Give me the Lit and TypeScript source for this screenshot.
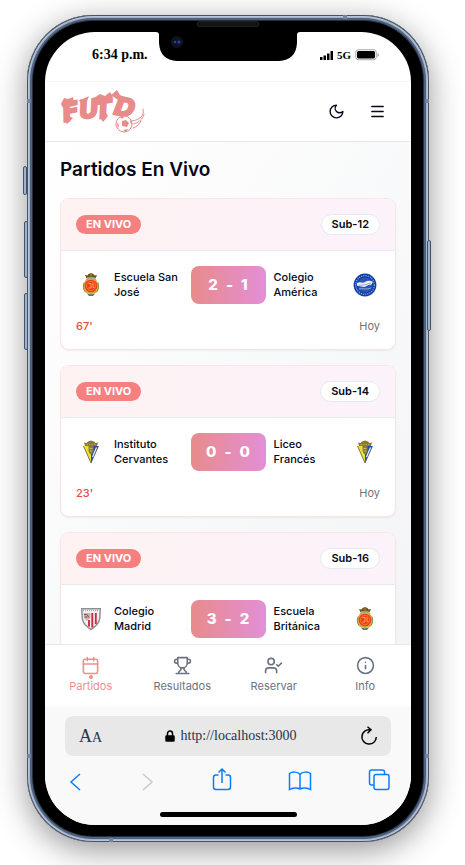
import { LitElement, html, css, svg, nothing } from "lit";
import { customElement, property } from "lit/decorators.js";
import { classMap } from "lit/directives/class-map.js";

type Crest = "crown" | "round" | "triangle" | "stripes";

interface Match {
  home: string;
  homeCrest: Crest;
  away: string;
  awayCrest: Crest;
  homeGoals: number;
  awayGoals: number;
  minute?: number;
  category: string;
}

const MATCHES: Match[] = [
  { home: "Escuela San José", homeCrest: "crown", away: "Colegio América", awayCrest: "round", homeGoals: 2, awayGoals: 1, minute: 67, category: "Sub-12" },
  { home: "Instituto Cervantes", homeCrest: "triangle", away: "Liceo Francés", awayCrest: "triangle", homeGoals: 0, awayGoals: 0, minute: 23, category: "Sub-14" },
  { home: "Colegio Madrid", homeCrest: "stripes", away: "Escuela Británica", awayCrest: "crown", homeGoals: 3, awayGoals: 2, category: "Sub-16" },
];

const crests = {
  crown: svg`
    <path d="M10.500 8.500 9 5l2.500.5 1-1.500L15 3l2.500 1 1 1.500L21 5l-1.500 3.500z" fill="#6b5420"/>
    <path d="M11 7.500h8M15 3.500v3.500" stroke="#b8932f" stroke-width="1"/>
    <path d="M10 9h10l1 2.500c2.500 2.500 2.500 8 0 10.500-1.500 2.500-10.500 2.500-12 0-2.500-2.500-2.500-8 0-10.500z" fill="#d8a93a"/>
    <path d="M8 12.500c-1 3-1 6.500 1 9M22 12.500c1 3 1 6.500-1 9" stroke="#7d9a4e" stroke-width="1" fill="none"/>
    <circle cx="15" cy="16" r="6.300" fill="#ee3f22"/>
    <circle cx="15" cy="16" r="4.600" fill="none" stroke="#f77e35" stroke-width=".8"/>
    <path d="M12.500 13.500H15V18M17 13v4.500h1.500M12.500 18H15" stroke="#ffb340" stroke-width=".9" fill="none"/>
    <path d="M11 23.500q4 1.500 8 0l-2 2.500h-4z" fill="#4c8060"/>`,
  round: svg`
    <circle cx="15" cy="15" r="11.400" fill="#0d3da6"/>
    <circle cx="15" cy="15" r="9.300" fill="none" stroke="#8ea7df" stroke-width="1.300" stroke-dasharray="1.200 1"/>
    <circle cx="15" cy="15" r="7.400" fill="#2d55b4"/>
    <path d="M7 13c4-2 5 1 8-1s6-1 8 0l-2 3c-3-1-4 2-7 2s-5-2-7-1z" fill="#e8eefb"/>
    <path d="M9 15c4 1 7-1 12-2M9 19c3-1 8 1 12-1" stroke="#8fa9dd" stroke-width="1" fill="none"/>`,
  triangle: svg`
    <path d="M9 9 8 5.500l2.500.5L12 4.500 15 3.500l3 1L19.500 6l2.500-.5L21 9z" fill="#8a7a30"/>
    <path d="M10.500 7.500h9" stroke="#b7a550" stroke-width="1" stroke-dasharray="1.500 1"/>
    <path d="M7.500 9H15v17z" fill="#f3e02a"/>
    <path d="M15 9h7.500L15 26z" fill="#1450aa"/>
    <path d="M7.500 9 15 26l7.500-17" fill="none" stroke="#4f5a58" stroke-width=".8"/>
    <path d="M20.500 10.500 16.500 20" stroke="#eef2fa" stroke-width="1.200"/>
    <path d="M12.500 9h5v4c0 2-1 3.500-2.500 4.500-1.500-1-2.500-2.500-2.500-4.500z" fill="#8b7a42"/>
    <path d="M13.500 11.500h3M14 14h2" stroke="#c9bb7a" stroke-width=".9"/>`,
  stripes: svg`
    <path d="M5 4h20l-.5 10c-.5 6-5 9-9.500 12.500C10.500 23 6 20 5.500 14z" fill="#8f8f95"/>
    <path d="M6.500 5.500h17l-.5 8.500c-.5 5-4 7.500-8 10.500-4-3-7.500-5.500-8-10.500z" fill="#f4f1f1"/>
    <path d="M7 6.500h16" stroke="#a9a9b0" stroke-width="1.500" stroke-dasharray="1 1"/>
    <path d="M13 16v6.500M16.300 9v14.500M19.800 9v11" stroke="#cf2740" stroke-width="1.900"/>
    <path d="M7.500 9h7v5l-4 3-2.500-3z" fill="#c9b4ae"/>
    <path d="M8 10.500h3l2 3M8.500 13h3" stroke="#8a4a48" stroke-width="1" fill="none"/>`,
};

const icons = {
  moon: svg`<path d="M12 3a6 6 0 0 0 9 9 9 9 0 1 1-9-9Z"/>`,
  menu: svg`<path d="M4 5h16M4 12h16M4 19h16"/>`,
  calendar: svg`<rect x="3" y="4" width="18" height="18" rx="2"/><path d="M8 2v4M16 2v4M3 10h18"/>`,
  trophy: svg`<path d="M6 9H4.500a2.500 2.500 0 0 1 0-5H6M18 9h1.500a2.500 2.500 0 0 0 0-5H18M4 22h16M10 14.660V17c0 .55-.47.98-.97 1.210C7.850 18.750 7 20.240 7 22M14 14.660V17c0 .55.47.98.97 1.210C16.150 18.750 17 20.240 17 22M18 2H6v7a6 6 0 0 0 12 0V2Z"/>`,
  userCheck: svg`<path d="M16 21v-2a4 4 0 0 0-4-4H6a4 4 0 0 0-4 4v2"/><circle cx="9" cy="7" r="4"/><path d="m16 11 2 2 4-4"/>`,
  info: svg`<circle cx="12" cy="12" r="10"/><path d="M12 16v-4M12 8h.01"/>`,
};

const lineIcon = (name: keyof typeof icons) => html`
  <svg class="line-icon" viewBox="0 0 24 24" aria-hidden="true">${icons[name]}</svg>`;

const iconStyles = css`
  .line-icon {
    display: block;
    fill: none;
    stroke: currentColor;
    stroke-width: 2;
    stroke-linecap: round;
    stroke-linejoin: round;
  }
`;

@customElement("match-card")
class MatchCard extends LitElement {
  @property({ attribute: false }) match!: Match;

  static styles = css`
    :host {
      display: block;
      border: 1px solid #fbe4e6;
      border-radius: 9px;
      background: #fff;
      box-shadow: 0 1px 2px rgba(0, 0, 0, 0.06);
      overflow: hidden;
    }
    .head {
      display: flex;
      justify-content: space-between;
      align-items: center;
      padding: 15px;
      border-bottom: 1px solid #e6eaf3;
      background: linear-gradient(to right, #fef2f2, #fcf2fa);
    }
    .live,
    .category {
      border-radius: 11px;
      font-size: 11px;
    }
    .live {
      padding: 0 10px;
      line-height: 19px;
      font-weight: 700;
      color: #fff;
      background: #f67f7f;
    }
    .category {
      padding: 0 10px;
      border: 1px solid #e4e9f2;
      line-height: 19px;
      font-weight: 600;
      background: #fff;
    }
    .body {
      display: grid;
      gap: 15px;
      padding: 15px;
    }
    .teams {
      display: grid;
      grid-template-columns: 1fr 75px 1fr;
      align-items: center;
    }
    .team {
      display: flex;
      align-items: center;
      gap: 8px;
    }
    .away {
      justify-content: space-between;
      padding-left: 8px;
    }
    .name {
      flex: 1;
      font-size: 11px;
      line-height: 15px;
      font-weight: 500;
    }
    .crest {
      flex: none;
      width: 30px;
      height: 30px;
    }
    .score {
      display: flex;
      justify-content: center;
      gap: 8px;
      border-radius: 8px;
      font-size: 15px;
      line-height: 38px;
      font-weight: 800;
      color: #fff;
      background: linear-gradient(to right, #e88b8b, #e38fd6);
    }
    .foot {
      display: flex;
      justify-content: space-between;
      font-size: 11px;
      line-height: 15px;
      font-weight: 500;
    }
    .minute {
      color: #ef4444;
    }
    .day {
      font-weight: 400;
      color: #71717a;
    }
  `;

  private crest(name: Crest) {
    return html`<svg class="crest" viewBox="0 0 30 30" aria-hidden="true">${crests[name]}</svg>`;
  }

  render() {
    const m = this.match;
    return html`
      <div class="head">
        <span class="live">EN VIVO</span>
        <span class="category">${m.category}</span>
      </div>
      <div class="body">
        <div class="teams">
          <div class="team">${this.crest(m.homeCrest)}<span class="name">${m.home}</span></div>
          <div class="score"><span>${m.homeGoals}</span><span>-</span><span>${m.awayGoals}</span></div>
          <div class="team away"><span class="name">${m.away}</span>${this.crest(m.awayCrest)}</div>
        </div>
        ${m.minute === undefined
          ? nothing
          : html`<div class="foot">
              <span class="minute">${m.minute}'</span>
              <span class="day">Hoy</span>
            </div>`}
      </div>
    `;
  }
}

@customElement("live-app")
class LiveApp extends LitElement {
  static styles = [
    iconStyles,
    css`
      :host {
        display: flex;
        flex-direction: column;
        flex: 1;
        min-height: 0;
        font-family: Inter, "Liberation Sans", sans-serif;
        color: #020817;
        background: #fff;
      }
      .header {
        display: flex;
        align-items: center;
        justify-content: space-between;
        height: 59px;
        padding: 0 15px;
        border-top: 1px solid #f6f6f6;
        border-bottom: 1px solid #e5e7eb;
      }
      .logo {
        width: 86px;
        height: 44px;
        overflow: visible;
      }
      .word {
        font: italic 700 25px "DejaVu Sans", sans-serif;
        fill: #e88b8b;
        stroke: #e88b8b;
        stroke-width: 2;
      }
      .actions {
        display: flex;
        gap: 3px;
      }
      .action {
        display: grid;
        place-items: center;
        width: 38px;
        height: 38px;
        padding: 0;
        border: 0;
        color: inherit;
        background: none;
      }
      .action .line-icon {
        width: 17px;
        height: 17px;
      }
      .content {
        flex: 1;
        min-height: 0;
        overflow: hidden auto;
        scrollbar-width: none;
        padding: 15px;
        background: linear-gradient(to bottom right, #fff, #f3f4f6);
      }
      .title {
        margin: 0 0 15px;
        font-size: 19px;
        line-height: 26px;
        font-weight: 600;
      }
      .cards {
        display: grid;
        gap: 15px;
      }
      .nav {
        display: grid;
        grid-template-columns: repeat(4, 1fr);
        border-top: 1px solid #e5e7eb;
        background: #fff;
      }
      .tab {
        position: relative;
        display: flex;
        flex-direction: column;
        align-items: center;
        gap: 4px;
        padding: 11px 0 12px;
        font-size: 11px;
        line-height: 15px;
        color: #6b7280;
        text-decoration: none;
      }
      .tab .line-icon {
        width: 19px;
        height: 19px;
      }
      .tab.active {
        color: #ee8e8e;
      }
      .tab.active::after {
        content: "";
        position: absolute;
        top: 30px;
        width: 4px;
        height: 4px;
        border-radius: 50%;
        background: currentColor;
      }
    `,
  ];

  render() {
    const tabs = [
      { label: "Partidos", icon: "calendar" as const, active: true },
      { label: "Resultados", icon: "trophy" as const, active: false },
      { label: "Reservar", icon: "userCheck" as const, active: false },
      { label: "Info", icon: "info" as const, active: false },
    ];
    return html`
      <header class="header">
        <svg class="logo" viewBox="0 0 86 44" role="img" aria-label="FUTD">
          <text class="word" x="4 20 36 53" y="32 29 29 24" rotate="-12 -8 -8 10">FUTD</text>
          <g fill="#e88b8b">
            <path d="M1 14 4 8l4 1 5-2 1 5-7 2-4 4z"/>
            <path d="m5 27 4-1 4 2-6 6-2-3zM19 10l6-2 4-2-2 5-6 3zM34 8l6-4 5 2 5-4 3 5-7 4-9 1z"/>
            <path d="m41 24 5-1 2 3-5 6-2-3zM51 5l6-5 3 5 8 4-2 4-8-3z"/>
          </g>
          <g fill="none" stroke="#e88b8b" stroke-linecap="round">
            <path d="M83 19c2 7-4 11-11 12M84 24c-1 6-6 9-11 10M81 31c-2 4-5 6-8 7"/>
          </g>
          <circle cx="64" cy="34" r="8" fill="#fff" stroke="#e88b8b"/>
          <path d="m62 31 4-1 3 3-2 4-5-1zM60 27l5-1-3 3zM71 29l1 6-2-3zM57 32l2 3-1 4zM63 40l5-1-2 3z" fill="#e88b8b"/>
        </svg>
        <div class="actions">
          <button class="action" aria-label="Modo oscuro">${lineIcon("moon")}</button>
          <button class="action" aria-label="Menú">${lineIcon("menu")}</button>
        </div>
      </header>
      <main class="content">
        <h1 class="title">Partidos En Vivo</h1>
        <div class="cards">${MATCHES.map((m) => html`<match-card .match=${m}></match-card>`)}</div>
      </main>
      <nav class="nav">
        ${tabs.map(
          (t) => html`<a class=${classMap({ tab: true, active: t.active })} href="#">
            ${lineIcon(t.icon)}<span>${t.label}</span>
          </a>`
        )}
      </nav>
    `;
  }
}

@customElement("browser-bar")
class BrowserBar extends LitElement {
  static styles = css`
    :host {
      display: block;
      padding: 10px 20px 8px;
      background: #f9f9f9;
      font-family: "Liberation Serif", serif;
      color: #26324b;
    }
    .address {
      display: flex;
      align-items: center;
      justify-content: space-between;
      height: 40px;
      padding: 0 13px 0 14px;
      border-radius: 8px;
      background: #e8e8e8;
    }
    button {
      display: block;
      padding: 0;
      border: 0;
      color: inherit;
      background: none;
      font: inherit;
    }
    .big {
      font-size: 18px;
    }
    .small {
      font-size: 14px;
    }
    .site {
      display: flex;
      align-items: center;
      gap: 6px;
    }
    .url {
      width: 117px;
      padding: 0;
      border: 0;
      outline: 0;
      color: inherit;
      background: none;
      font: 14px/20px "Liberation Serif", serif;
    }
    svg {
      display: block;
      fill: none;
      stroke: #0a7cff;
      stroke-width: 1.5;
    }
    .lock {
      fill: #000;
      stroke: #000;
    }
    .reload {
      stroke: #000;
    }
    .tools {
      display: flex;
      justify-content: space-between;
      padding: 11px 1px 17px 2px;
    }
    .off svg {
      stroke: #c9c9cb;
    }
    .home {
      width: 137px;
      height: 5px;
      margin: 0 auto;
      border-radius: 3px;
      background: #000;
    }
  `;

  render() {
    return html`
      <div class="address">
        <button aria-label="Tamaño del texto"><span class="big">A</span><span class="small">A</span></button>
        <div class="site">
          <svg class="lock" width="10" height="12" viewBox="0 0 10 12">
            <rect x="1" y="6" width="8" height="5" rx=".5"/>
            <path d="M2.500 6V3.500a2.500 2.500 0 0 1 5 0V6" fill="none"/>
          </svg>
          <input class="url" aria-label="Dirección" value="http://localhost:3000" />
        </div>
        <button aria-label="Recargar">
          <svg class="reload" width="18" height="20" viewBox="0 0 18 20">
            <path d="M16.300 11a7.200 7.200 0 1 1-6-7.200M7.500.8l3.500 3-3.500 3.400"/>
          </svg>
        </button>
      </div>
      <div class="tools">
        <button aria-label="Atrás">
          <svg width="16" height="28" viewBox="0 0 16 28"><path d="m13 7-9 8 9 8"/></svg>
        </button>
        <button class="off" aria-label="Adelante" disabled>
          <svg width="16" height="28" viewBox="0 0 16 28"><path d="m4 7 9 8-9 8"/></svg>
        </button>
        <button aria-label="Compartir">
          <svg width="20" height="28" viewBox="0 0 20 28">
            <path d="M6.500 8H4a2.500 2.500 0 0 0-2.500 2.500V20A2.500 2.500 0 0 0 4 22.500h12a2.500 2.500 0 0 0 2.500-2.500v-9.500A2.500 2.500 0 0 0 16 8h-2.500M10 16V2M6.500 5.500 10 2l3.500 3.500"/>
          </svg>
        </button>
        <button aria-label="Marcadores">
          <svg width="24" height="28" viewBox="0 0 24 28">
            <path d="M12 7.500C10 4.500 4 4.500 1.500 6.500v16c3-2 8-2 10.500-.5 2.500-1.500 7.500-1.500 10.500.5v-16C20 4.500 14 4.500 12 7.500zM12 7.500V22"/>
          </svg>
        </button>
        <button aria-label="Pestañas">
          <svg width="22" height="28" viewBox="0 0 22 28">
            <rect x="6" y="7.500" width="15" height="15" rx="2"/>
            <path d="M6 18H3.500a2 2 0 0 1-2-2V5a2 2 0 0 1 2-2h11a2 2 0 0 1 2 2v2.500"/>
          </svg>
        </button>
      </div>
      <div class="home"></div>
    `;
  }
}

@customElement("app-root")
class AppRoot extends LitElement {
  static styles = css`
    :host {
      display: flex;
      box-sizing: border-box;
      height: 100vh;
      min-height: 600px;
      padding: 15px 36px 23px 27px;
      background: #fff;
      overflow: hidden;
    }
    .phone {
      position: relative;
      display: flex;
      flex: 1;
      min-width: 0;
      padding: 17px 18px;
      border-radius: 66px;
      background: #000;
      box-shadow:
        inset 0 0 0 1px #4a5361,
        inset 0 0 0 2px #b9c6da,
        inset 0 0 0 3px #a3b2c9,
        inset 0 0 0 5px #4d637f,
        inset 0 0 0 6px #26303d,
        0 8px 32px rgba(0, 0, 0, 0.42);
    }
    .key {
      position: absolute;
      width: 4px;
      box-sizing: border-box;
      border: 1px solid #465365;
      border-radius: 2px;
      background: #9fb2cd;
    }
    .mute {
      left: -4px;
      top: 151px;
      height: 29px;
    }
    .louder {
      left: -3px;
      top: 206px;
      height: 57px;
    }
    .quieter {
      left: -3px;
      top: 278px;
      height: 57px;
    }
    .power {
      right: -2px;
      top: 225px;
      height: 91px;
    }
    .band {
      position: absolute;
      width: 4px;
      height: 4px;
      background: #74839f;
    }
    .band-tl { left: 0; top: 84px; }
    .band-tr { right: 0; top: 84px; }
    .band-bl { left: 0; bottom: 84px; }
    .band-br { right: 0; bottom: 84px; }
    .band-top { right: 82px; top: 0; }
    .band-bottom { left: 82px; bottom: 0; }
    .screen {
      position: relative;
      display: flex;
      flex-direction: column;
      flex: 1;
      min-width: 0;
      border-radius: 50px;
      background: #fff;
      overflow: hidden;
    }
    .notch {
      position: absolute;
      top: 0;
      left: 50%;
      transform: translateX(-50%);
    }
    .speaker {
      position: absolute;
      top: 6px;
      left: 50%;
      width: 62px;
      height: 6px;
      box-sizing: border-box;
      transform: translateX(-50%);
      border: 1px solid #202020;
      border-radius: 2px;
      background: #141414;
    }
    .status {
      display: flex;
      justify-content: space-between;
      align-items: center;
      height: 49px;
      box-sizing: border-box;
      padding: 0 32px 3px 47px;
      font: 700 14px "Liberation Serif", serif;
      color: #000;
    }
    .signal {
      display: flex;
      align-items: center;
      gap: 4px;
      font-size: 11px;
    }
  `;

  render() {
    return html`
      <div class="phone">
        <span class="key mute"></span>
        <span class="key louder"></span>
        <span class="key quieter"></span>
        <span class="key power"></span>
        <span class="band band-tl"></span>
        <span class="band band-tr"></span>
        <span class="band band-bl"></span>
        <span class="band band-br"></span>
        <span class="band band-top"></span>
        <span class="band band-bottom"></span>
        <span class="speaker"></span>
        <div class="screen">
          <div class="status">
            <span>6:34 p.m.</span>
            <span class="signal">
              <svg width="13" height="9" viewBox="0 0 13 9" aria-hidden="true">
                <path d="M0 6h2.500v3H0zM3.500 4.500H6V9H3.500zM7 2.500h2.500V9H7zM10.500 0H13v9h-2.500z"/>
              </svg>
              5G
              <svg width="24" height="12" viewBox="0 0 24 12" aria-hidden="true">
                <rect x=".75" y=".75" width="20.500" height="10" rx="2.500" fill="none" stroke="#a6a6a6"/>
                <rect x="2" y="2" width="18" height="7.500" rx="1.500"/>
                <path d="M22.500 4v4q1.500-.5 1.500-2t-1.500-2z" fill="#a6a6a6"/>
              </svg>
            </span>
          </div>
          <live-app></live-app>
          <browser-bar></browser-bar>
          <svg class="notch" width="144" height="29" viewBox="0 0 144 29" aria-hidden="true">
            <path d="M0 0h144q-3 0-3 3v8q-1 17-18 18H21Q4 28 3 11V3q0-3-3-3z"/>
            <circle cx="21" cy="10" r="6" fill="#10131a"/>
            <circle cx="21" cy="10" r="4" fill="#0b1230"/>
            <circle cx="19" cy="10" r="1.300" fill="#24506a"/>
            <circle cx="23" cy="10" r="1.500" fill="#3440a0"/>
          </svg>
        </div>
      </div>
    `;
  }
}
